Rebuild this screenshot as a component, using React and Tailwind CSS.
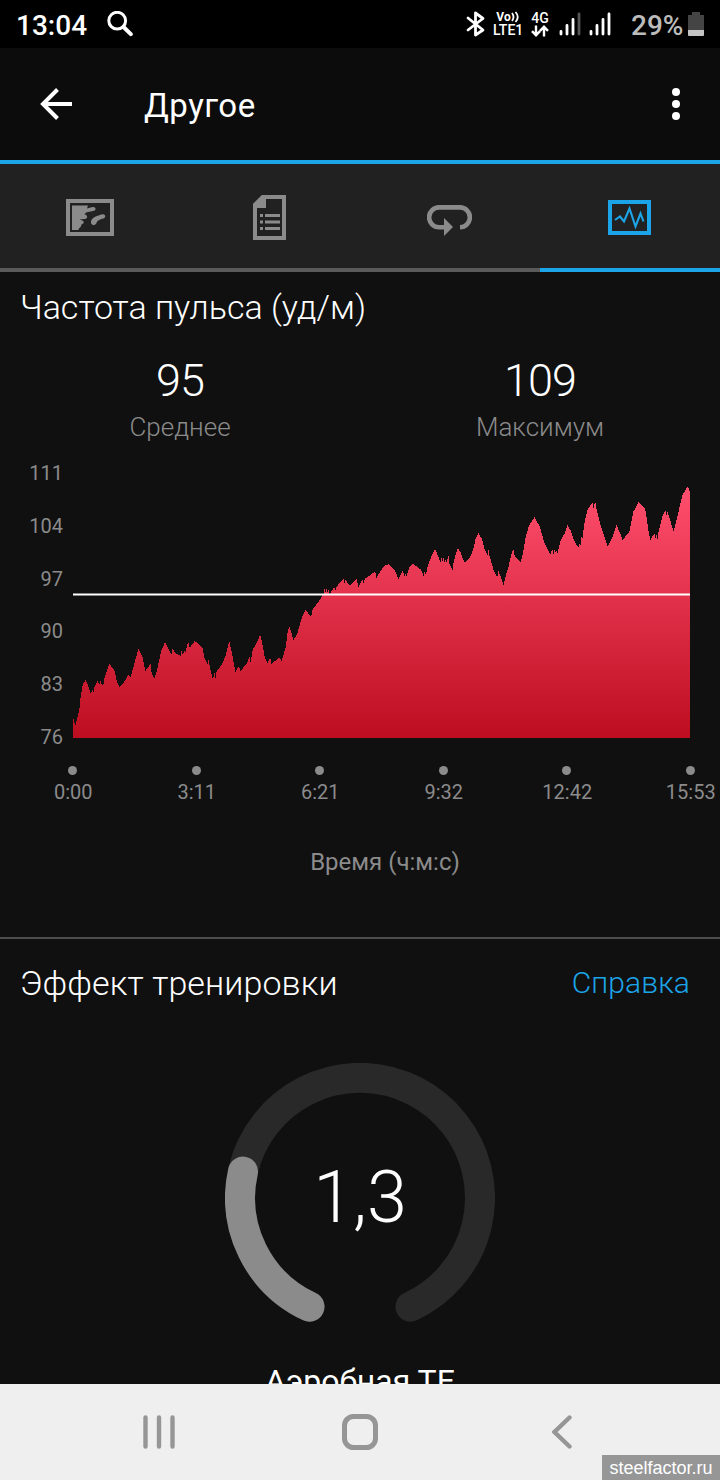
const yTicks = [111, 104, 97, 90, 83, 76];
const xTicks = ["0:00", "3:11", "6:21", "9:32", "12:42", "15:53"];

const laps = [
  {
    dx: -39,
    dy: 270,
    points: "39,470 41,480 46,498 50,480 58,450 62,410 68,375 76,360 84,375 92,402 97,388 100,400 103,382 112,363 118,375 122,363 126,376 130,375 133,355 148,312 163,330 170,362 178,381 190,370 205,345 212,350 222,315 235,267 247,290 256,333 268,317 272,312 275,340 283,354 290,335 303,275 315,246 325,265 334,285 337,267 350,282 363,288 365,270 369,288 372,270 376,278 382,252 386,247 389,264 404,243 418,253 428,265 434,295 443,313 445,297 450,322 457,354 461,350 464,338 466,356 470,335 485,314 497,287 508,243 518,290 526,336 537,317 541,333 560,312 569,290 572,308 578,270 592,245 600,224 605,240 614,290 622,310 631,292 634,312 658,292 665,303 677,262 683,215 688,198 696,225 701,240 712,220 725,175 736,150 754,170 757,150 778,122",
  },
  {
    dx: 561,
    dy: 90,
    points: "180,300 188,285 191,280 193,265 196,280 199,265 202,278 205,267 208,282 214,275 220,265 225,262 228,278 229,262 240,247 251,237 253,250 257,240 270,258 290,237 296,262 300,250 308,240 311,252 314,237 330,226 343,216 347,220 349,235 362,212 375,195 386,193 405,212 415,237 428,213 434,230 437,222 440,228 448,203 459,192 482,208 487,217 491,230 494,215 498,225 504,195 516,165 525,147 533,165 541,188 544,171 547,187 550,172 553,186 556,178 559,186 562,178 566,168 568,190 573,203 578,210 581,185 590,155 593,145 602,157 613,188 630,172",
  },
  {
    dx: 1191,
    dy: 0,
    points: "0,262 10,238 17,205 26,189 36,208 45,242 53,255 55,237 58,255 70,298 82,322 85,303 92,318 101,345 106,322 115,292 125,250 130,238 134,257 152,278 160,245 167,200 177,167 194,141 210,172 222,215 241,255 247,237 250,255 253,240 256,246 259,240 262,252 272,210 284,190 292,165 303,183 312,212 325,233 328,220 331,230 334,200 337,210 343,160 352,120 367,97 370,116 373,105 376,96 380,120 390,160 405,205 413,230 426,205 439,165 450,188 458,210 478,185 490,125 506,96 526,118 535,180 541,210 553,190 556,208 559,190 562,210 565,188 577,140 586,121 589,137 592,123 602,155 611,186 622,140 637,75 652,51 657,55 660,70",
  },
];

const trace = laps
  .flatMap(({ dx, dy, points }) =>
    points.split(" ").map((pair) => {
      const [x, y] = pair.split(",").map(Number);
      return `${x + dx},${y + dy}`;
    }),
  )
  .join(" ");

function StatusBar() {
  return (
    <div className="flex h-12 shrink-0 items-center bg-black pl-4 pr-4 text-white">
      <span className="w-[91px] pt-[3px] text-[28px] font-medium leading-none">13:04</span>
      <svg className="size-[26px]" viewBox="0 0 26 26" fill="none" stroke="currentColor">
        <circle cx="10.2" cy="9.7" r="8.4" strokeWidth="3" />
        <path d="M16.5 16 23.8 23.2" strokeWidth="4" strokeLinecap="round" />
      </svg>
      <svg className="ml-auto h-[26px] w-[19px]" viewBox="0 0 19 26" fill="none" stroke="currentColor" strokeWidth="2.8" strokeLinejoin="round" strokeLinecap="round">
        <path d="M2 7 17 19 9.5 24V2L17 7.5 2 19" />
      </svg>
      <div className="ml-[8px] w-[30px] text-[14px] font-medium">
        <div className="flex items-center justify-center text-[12px] font-bold leading-[12px]">
          Vo
          <svg className="h-3 w-[9px]" viewBox="0 0 9 12" fill="none" stroke="currentColor" strokeWidth="1.8">
            <path d="M1 2Q4 6 1 10M4.5 1Q9 6 4.5 11" />
          </svg>
        </div>
        <div className="text-center leading-[15px]">LTE1</div>
      </div>
      <div className="ml-[8px] mr-px flex w-[18px] flex-col items-center text-[14px] font-medium leading-[14px]">
        4G
        <svg className="h-[12px] w-[18px]" viewBox="0 0 18 12" fill="none" stroke="currentColor" strokeWidth="2.4">
          <path d="M5 0.5V10M1 6.2 5 10.2 9 6.2M13 11.5V2M9 5.8 13 1.8 17 5.8" />
        </svg>
      </div>
      <svg className="ml-[9px] h-6 w-[52px]" viewBox="0 0 52 24" stroke="currentColor" strokeWidth="2.8" strokeLinecap="round">
        <path d="M2 19.5V22M8 13.5V22M14 7.5V22M32 19.5V22M38 13.5V22M44 7.5V22M50 2V22" />
        <path d="M20 2V22" stroke="#555" />
      </svg>
      <span className="ml-[20px] w-[57px] pt-[3px] text-[28px] font-medium leading-none text-[#bcbcbc]">29%</span>
      <svg className="h-6 w-4" viewBox="0 0 16 24">
        <path d="M4 0h8v3h4v15H0V3h4z" fill="#444" />
        <path d="M0 18h16v5q0 1-1 1H1q-1 0-1-1z" fill="#c4c4c4" />
      </svg>
    </div>
  );
}

function Header() {
  return (
    <header className="flex h-[116px] shrink-0 items-center border-b-4 border-[#1ca4e8] bg-[#0c0c0c] pl-10 pr-10 text-white">
      <svg className="h-8 w-8" viewBox="0 0 32 32" fill="none" stroke="currentColor" strokeWidth="4">
        <path d="M32 16H3M17.5 1.5 3 16 17.5 30.5" />
      </svg>
      <h1 className="ml-[72px] pt-0.5 text-[33px] leading-none tracking-[0.5px]">Другое</h1>
      <svg className="ml-auto h-8 w-2" viewBox="0 0 8 32" fill="currentColor">
        <circle cx="4" cy="4" r="4" />
        <circle cx="4" cy="16" r="4" />
        <circle cx="4" cy="28" r="4" />
      </svg>
    </header>
  );
}

function MapIcon() {
  return (
    <svg className="h-[37px] w-12" viewBox="0 0 48 37">
      <rect x="2" y="2" width="44" height="33" fill="none" stroke="currentColor" strokeWidth="4" />
      <path d="M6 6.5H22L21 9.5 26.5 8C30 7.5 30.5 11 28 11.8L20 13.5 18.5 15.5C22 16 22 19.5 19 20L13.5 20.5C17 21.5 19 23 17 24.5L15 26C16 28 13 28 12.5 31H6z" fill="currentColor" />
      <path d="M25 22.5C26 18.5 30 17 34 16 39 13.5 41 18 37.5 19.5 33.5 20.5 31.5 21 30 25 27.5 27.5 24.5 25.5 25 22.5z" fill="currentColor" />
    </svg>
  );
}

function DetailsIcon() {
  return (
    <svg className="mr-px h-[45px] w-[33px]" viewBox="0 0 33 45" fill="none" stroke="currentColor">
      <path d="M2 10 10 2H31V43H2z" strokeWidth="4" />
      <path d="M0 9 9 0h4v13H0z" fill="currentColor" stroke="none" />
      <path d="M7 20.5h3M12 20.5h15M7 27h3M12 27h15M7 33.5h3M12 33.5h15" strokeWidth="3" />
    </svg>
  );
}

function LapsIcon() {
  return (
    <svg className="mr-0.5 mt-1.5 h-[31px] w-[45px]" viewBox="0 0 45 31">
      <path d="M18 22.2h-6a9.9 9.9 0 0 1 0-19.8h21a9.9 9.9 0 0 1 0 19.8" fill="none" stroke="currentColor" strokeWidth="4.6" />
      <path d="M17 13v18l9-9z" fill="currentColor" />
    </svg>
  );
}

function ChartIcon() {
  return (
    <svg className="mr-px h-[35px] w-[43px]" viewBox="0 0 43 35" fill="none" stroke="currentColor">
      <rect x="2" y="2" width="39" height="31" strokeWidth="4" />
      <path d="M7 20 12 16.5 16 21.5 21.5 8.5 27.5 26.5 32.5 13.5 35.5 21.5" strokeWidth="2.1" />
    </svg>
  );
}

const tabs = [
  { label: "Карта", icon: MapIcon },
  { label: "Сведения", icon: DetailsIcon },
  { label: "Круги", icon: LapsIcon },
  { label: "Графики", icon: ChartIcon, active: true },
];

function Tabs() {
  return (
    <nav className="grid h-[108px] shrink-0 grid-cols-4 bg-[#212121]">
      {tabs.map(({ label, icon: Icon, active }) => (
        <button
          key={label}
          aria-label={label}
          className={`flex items-center justify-center border-b-4 pt-0.5 ${active ? "border-[#1ca4e8] text-[#1ca4e8]" : "border-[#5a5a5a] text-[#8b8b8b]"}`}
        >
          <Icon />
        </button>
      ))}
    </nav>
  );
}

function Stat({ value, label }) {
  return (
    <div className="flex flex-col items-center">
      <strong className="text-[45px] font-light leading-[52px] tracking-[-1px] text-white">{value}</strong>
      <span className="mt-0.5 text-[26px] font-light leading-9 text-[#8b8b8b]">{label}</span>
    </div>
  );
}

function HeartRate() {
  return (
    <section className="h-[667px] shrink-0 border-b-2 border-[#4d4d4d]">
      <h2 className="pl-5 pt-[15px] text-[34px] font-light leading-10 text-white">Частота пульса (уд/м)</h2>
      <div className="mt-7 grid grid-cols-2">
        <Stat value="95" label="Среднее" />
        <Stat value="109" label="Максимум" />
      </div>
      <div className="mt-[15px] flex">
        <div className="flex h-[290px] w-[63px] flex-col justify-between text-right text-[20px] leading-[26px] text-[#8b8b8b]">
          {yTicks.map((tick) => (
            <span key={tick}>{tick}</span>
          ))}
        </div>
        <svg className="ml-[10px] mt-[10px] h-[268px] w-[617px]" viewBox="0 0 1851 804" preserveAspectRatio="none">
          <defs>
            <linearGradient id="pulse" gradientUnits="userSpaceOnUse" x1="0" y1="51" x2="0" y2="804">
              <stop offset="0" stopColor="#ff4f6e" />
              <stop offset="1" stopColor="#bd0d20" />
            </linearGradient>
          </defs>
          <polygon points={`0,804 ${trace} 1851,804`} fill="url(#pulse)" shapeRendering="crispEdges" />
          <path d="M0 373.5H1851" stroke="#fff" strokeWidth="6" />
        </svg>
      </div>
      <div className="overflow-hidden">
        <div className="ml-[11px] mt-4 grid w-[741px] grid-cols-6 text-center text-[20px] leading-6 text-[#8b8b8b]">
          {xTicks.map((tick) => (
            <div key={tick} className="flex flex-col items-center">
              <span className="size-[9px] rounded-full bg-[#8b8b8b]" />
              <span className="mt-[5px] pl-px">{tick}</span>
            </div>
          ))}
        </div>
      </div>
      <p className="mt-[42px] pl-[50px] text-center text-[24px] leading-8 text-[#8b8b8b]">Время (ч:м:с)</p>
    </section>
  );
}

function TrainingEffect() {
  return (
    <section className="flex flex-col">
      <div className="flex items-center justify-between pl-5 pr-[30px] pt-6 font-light leading-10">
        <h2 className="text-[34px] tracking-[0.1px] text-white">Эффект тренировки</h2>
        <a className="text-[30px] tracking-[0.1px] text-[#1ca4e8]">Справка</a>
      </div>
      <div className="mt-[60px] grid place-items-center self-center">
        <svg className="col-start-1 row-start-1 size-[270px]" viewBox="0 0 270 270" fill="none" strokeWidth="30" strokeLinecap="round">
          <path d="M84.5 243.7A120 120 0 1 1 185.5 243.7" stroke="#292929" />
          <path d="M84.5 243.7A120 120 0 0 1 18 108.6" stroke="#8b8b8b" />
        </svg>
        <span className="col-start-1 row-start-1 text-[72px] font-light leading-none text-white">1,3</span>
      </div>
      <p className="mt-7 text-center text-[32px] leading-10 text-white">Аэробная ТЕ</p>
    </section>
  );
}

function SystemNav() {
  return (
    <footer className="relative flex h-24 shrink-0 items-center bg-[#efefef] text-[#969696]">
      <svg className="ml-[143px] h-[34px] w-8" viewBox="0 0 32 34" stroke="currentColor" strokeWidth="4.4" strokeLinecap="round">
        <path d="M2.5 2.5V31.5M16 2.5V31.5M29.5 2.5V31.5" />
      </svg>
      <svg className="ml-[167px] size-9" viewBox="0 0 36 36" fill="none" stroke="currentColor" strokeWidth="5">
        <rect x="2.5" y="2.5" width="31" height="31" rx="9" />
      </svg>
      <svg className="ml-[174px] h-[34px] w-5" viewBox="0 0 20 34" fill="none" stroke="currentColor" strokeWidth="4.4" strokeLinecap="round">
        <path d="M17.5 2.5 2.5 17 17.5 31.5" />
      </svg>
      <span className="absolute bottom-0 right-0 flex h-[25px] w-[118px] items-center justify-center bg-[#969696] font-['Liberation_Sans',sans-serif] text-[18px] leading-none text-white">steelfactor.ru</span>
    </footer>
  );
}

export default function App() {
  return (
    <div className="flex h-[1480px] w-[720px] flex-col overflow-hidden bg-[#101010] font-[Roboto,sans-serif]">
      <StatusBar />
      <Header />
      <Tabs />
      <main className="flex min-h-0 flex-1 flex-col overflow-hidden">
        <HeartRate />
        <TrainingEffect />
      </main>
      <SystemNav />
    </div>
  );
}
